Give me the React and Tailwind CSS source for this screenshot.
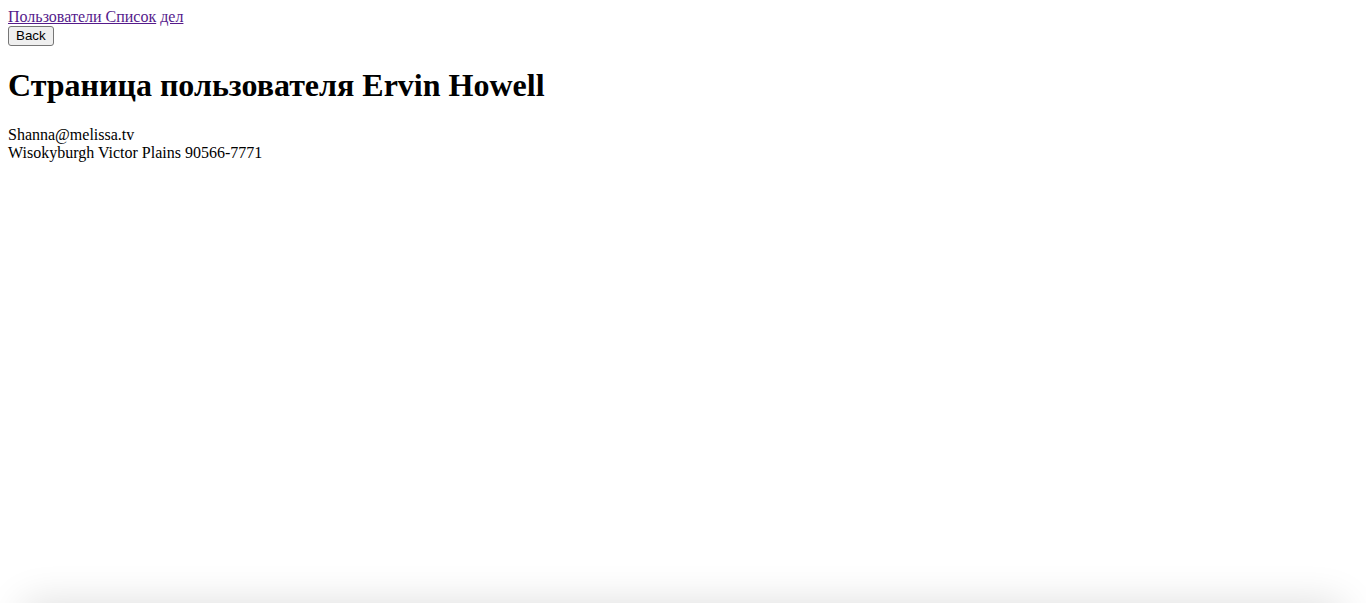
export default function App() {
    return (
        <div className="min-h-screen bg-white p-2 text-black text-[16px] leading-[18px] font-['Liberation_Serif',serif]">
            <nav>
                <a href="#" className="text-[#551a8b] underline">Пользователи Список</a>{' '}
                <a href="#" className="text-[#551a8b] underline">дел</a>
            </nav>
            <button
                type="button"
                className="block h-[20px] px-[7px] bg-[#efefef] border border-[#767676] rounded-[3px] text-[13.33px] leading-[16px] font-['Liberation_Sans',sans-serif]"
            >
                Back
            </button>
            <h1 className="my-[21.44px] text-[32px] leading-[37px] font-bold">Страница пользователя Ervin Howell</h1>
            <div>Shanna@melissa.tv</div>
            <div>Wisokyburgh Victor Plains 90566-7771</div>
            <div className="fixed left-[24px] right-[24px] top-[603px] h-10 shadow-[0_0_40px_rgba(0,0,0,0.14)] bg-white"></div>
        </div>
    );
}
